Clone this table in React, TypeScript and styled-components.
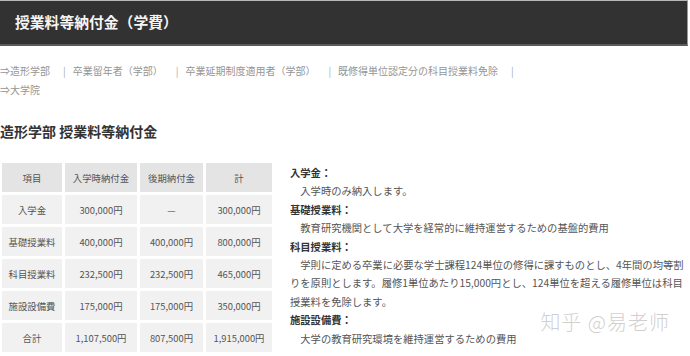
import React from 'react'
import { styled, createGlobalStyle } from 'styled-components'

const GlobalStyle = createGlobalStyle`
    body {
        margin: 0;
        background: #fff;
        font-family: "Noto Sans CJK JP", "Noto Sans", sans-serif;
    }
`

const links = [
    '卒業留年者（学部）',
    '卒業延期制度適用者（学部）',
    '既修得単位認定分の科目授業料免除',
]

const rows = [
    ['入学金', '300,000円', '—', '300,000円'],
    ['基礎授業料', '400,000円', '400,000円', '800,000円'],
    ['科目授業料', '232,500円', '232,500円', '465,000円'],
    ['施設設備費', '175,000円', '175,000円', '350,000円'],
    ['合計', '1,107,500円', '807,500円', '1,915,000円'],
]

const notes = [
    { label: '入学金：', text: '入学時のみ納入します。' },
    {
        label: '基礎授業料：',
        text: '教育研究機関として大学を経常的に維持運営するための基盤的費用',
    },
    {
        label: '科目授業料：',
        text: '学則に定める卒業に必要な学士課程124単位の修得に課すものとし、4年間の均等割りを原則とします。履修1単位あたり15,000円とし、124単位を超える履修単位は科目授業料を免除します。',
    },
    { label: '施設設備費：', text: '大学の教育研究環境を維持運営するための費用' },
]

const App: React.FC = () => {
    return (
        <>
            <GlobalStyle />
            <Page>
                <TitleBar>
                    <Title>授業料等納付金（学費）</Title>
                </TitleBar>
                <Breadcrumb>
                    <Crumb>⇒造形学部</Crumb>
                    {links.map((l) => (
                        <React.Fragment key={l}>
                            <Sep>|</Sep>
                            <Crumb>{l}</Crumb>
                        </React.Fragment>
                    ))}
                    <Sep>|</Sep>
                    <CrumbLine>⇒大学院</CrumbLine>
                </Breadcrumb>
                <Heading>造形学部 授業料等納付金</Heading>
                <Content>
                    <FeeTable>
                        <thead>
                            <tr>
                                <HeadCell $w={60}>項目</HeadCell>
                                <HeadCell $w={72}>入学時納付金</HeadCell>
                                <HeadCell $w={63}>後期納付金</HeadCell>
                                <HeadCell $w={66}>計</HeadCell>
                            </tr>
                        </thead>
                        <tbody>
                            {rows.map((r) => (
                                <tr key={r[0]}>
                                    {r.map((c, i) => (
                                        <Cell key={i}>{c}</Cell>
                                    ))}
                                </tr>
                            ))}
                        </tbody>
                    </FeeTable>
                    <Notes>
                        {notes.map((n) => (
                            <React.Fragment key={n.label}>
                                <NoteLabel>{n.label}</NoteLabel>
                                <NoteText>{n.text}</NoteText>
                            </React.Fragment>
                        ))}
                    </Notes>
                    <Watermark>知乎 @易老师</Watermark>
                </Content>
            </Page>
        </>
    )
}

export default App

const Page = styled.div`
    width: 690px;
    height: 356px;
    overflow: hidden;
    color: #333;
`

const TitleBar = styled.div`
    width: 672px;
    height: 43px;
    background: #323232;
    border-top: 1px solid #b8b8b8;
    border-right: 1px solid #9a9a9a;
    border-bottom: 2px solid #5a5a5a;
    display: flex;
    align-items: center;
    padding-left: 15px;
`

const Title = styled.h1`
    margin: 0;
    font-size: 14.8px;
    font-weight: 700;
    color: #f4f4f4;
    line-height: 1;
`

const Breadcrumb = styled.div`
    margin-top: 15px;
    font-size: 10px;
    line-height: 19px;
    color: #959595;
    display: flex;
    flex-wrap: wrap;
    align-items: baseline;
`

const Crumb = styled.span`
    white-space: nowrap;
`

const CrumbLine = styled.span`
    flex-basis: 100%;
`

const Sep = styled.span`
    padding: 0 7px 0 13px;
    color: #a4aeb6;
`

const Heading = styled.h2`
    margin: 22px 0 0;
    font-size: 14px;
    line-height: 20px;
    font-weight: 700;
    color: #333;
`

const Content = styled.div`
    position: relative;
    display: flex;
    align-items: flex-start;
    margin-top: 19px;
`

const FeeTable = styled.table`
    border-collapse: separate;
    border-spacing: 3px;
    margin-left: -1px;
    font-size: 9.4px;
    color: #555;
    flex: none;
`

const HeadCell = styled.th<{ $w: number }>`
    width: ${(p) => p.$w}px;
    height: 29px;
    padding: 0;
    background: #e4e4e4;
    font-weight: 400;
    text-align: center;
`

const Cell = styled.td`
    height: 29px;
    padding: 0;
    background: #f1f1f1;
    text-align: center;
`

const Notes = styled.div`
    flex: 1;
    padding: 4px 6px 0 15px;
    font-size: 10.3px;
    line-height: 18.4px;
    color: #555;
`

const NoteLabel = styled.div`
    font-weight: 700;
    color: #333;
`

const NoteText = styled.div`
    text-indent: 1em;
`

const Watermark = styled.div`
    position: absolute;
    right: 20px;
    top: 147px;
    font-size: 20px;
    font-weight: 300;
    letter-spacing: 1px;
    color: rgba(200, 200, 200, 0.85);
    pointer-events: none;
`
